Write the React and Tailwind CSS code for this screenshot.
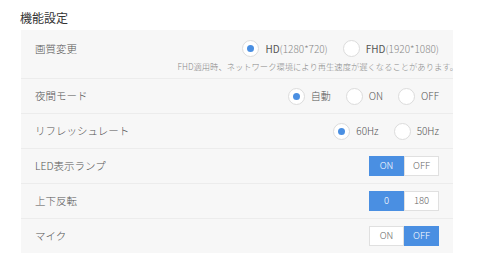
const font = { fontFamily: '"Noto Sans CJK JP", "Noto Sans", sans-serif' };

function Radio({ checked, children }) {
  return (
    <div className="flex items-center gap-[6px]">
      <span className="w-[17px] h-[17px] rounded-full bg-white border border-[#dcdcdc] flex items-center justify-center">
        {checked && <span className="w-[7px] h-[7px] rounded-full bg-[#4a8fe2]" />}
      </span>
      <span className="text-[10px] text-[#555] leading-none font-light">{children}</span>
    </div>
  );
}

function Toggle({ options, active }) {
  return (
    <div className="flex h-[20px]">
      {options.map((o, i) => (
        <span
          key={o}
          className={`w-[35px] flex items-center justify-center text-[9.5px] leading-none font-light ${
            i === active
              ? 'bg-[#4a8fe2] text-white'
              : 'bg-white text-[#666] border border-[#e0e0e0]'
          }`}
        >
          {o}
        </span>
      ))}
    </div>
  );
}

function Row({ label, children }) {
  return (
    <div className="flex items-center justify-between h-[35px] pl-[14px] pr-[14px] border-t border-[#ececec]">
      <span className="text-[10.5px] text-[#555] font-light">{label}</span>
      <div className="flex items-center gap-[15px]">{children}</div>
    </div>
  );
}

export default function App() {
  return (
    <div className="w-[480px] h-[269px] bg-white pt-[10px] px-[21px]" style={font}>
      <h2 className="text-[12px] leading-[16px] text-[#333] -ml-[1px]">機能設定</h2>
      <div className="mt-[4px] w-[432px] bg-[#f7f7f7]">
        <div className="h-[48px] pt-[10px] pl-[14px] pr-[14px]">
          <div className="flex items-center justify-between h-[17px]">
            <span className="text-[10.5px] text-[#555] font-light">画質変更</span>
            <div className="flex items-center gap-[15px]">
              <Radio checked>
                <span className="font-normal">HD</span>
                <span className="text-[#888]">(1280*720)</span>
              </Radio>
              <Radio>
                <span className="font-normal">FHD</span>
                <span className="text-[#888]">(1920*1080)</span>
              </Radio>
            </div>
          </div>
          <div className="flex justify-end -mr-[19px] mt-[3px]">
            <span className="text-[8.3px] leading-[12px] text-[#888] font-light whitespace-nowrap">
              FHD適用時、ネットワーク環境により再生速度が遅くなることがあります。
            </span>
          </div>
        </div>
        <Row label="夜間モード">
          <Radio checked>自動</Radio>
          <Radio>ON</Radio>
          <Radio>OFF</Radio>
        </Row>
        <Row label="リフレッシュレート">
          <Radio checked>60Hz</Radio>
          <Radio>50Hz</Radio>
        </Row>
        <Row label="LED表示ランプ">
          <Toggle options={['ON', 'OFF']} active={0} />
        </Row>
        <Row label="上下反転">
          <Toggle options={['0', '180']} active={0} />
        </Row>
        <Row label="マイク">
          <Toggle options={['ON', 'OFF']} active={1} />
        </Row>
      </div>
    </div>
  );
}
